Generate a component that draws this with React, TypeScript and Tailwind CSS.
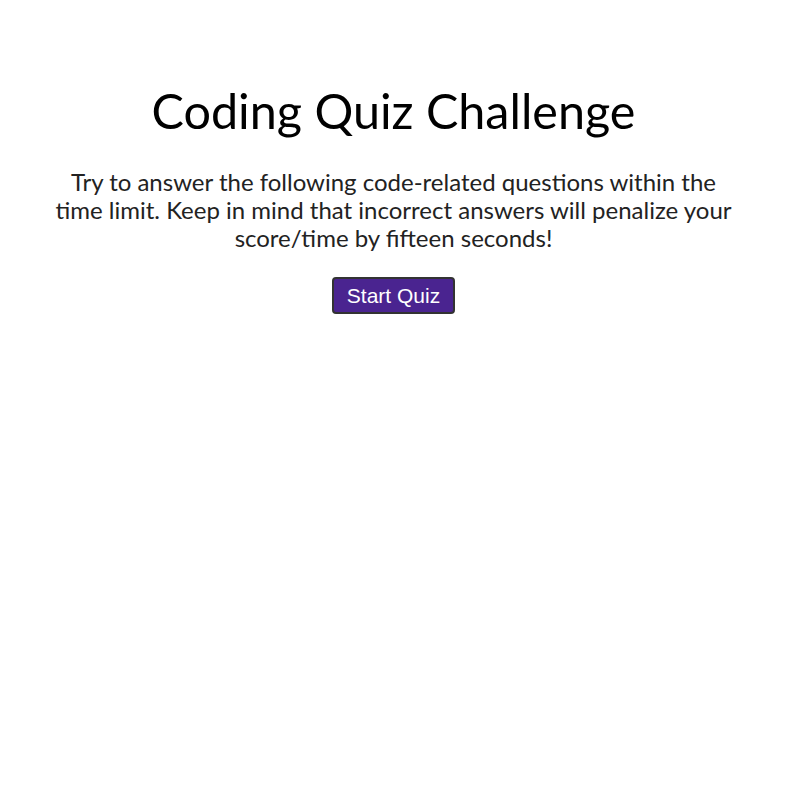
import React from 'react';

export default function App() {
  return (
    <div className="min-h-screen bg-white font-['Lato',sans-serif] text-[#222]">
      <div className="w-[787px]">
        <main className="mx-auto flex w-[686px] flex-col items-center pt-[81px] text-center">
          <h1 className="text-[48.5px] leading-[58px] font-normal text-black">Coding Quiz Challenge</h1>
          <p className="mt-[29px] text-[24px] leading-[28px]">
            Try to answer the following code-related questions within the time limit. Keep in mind that incorrect answers will penalize your score/time by fifteen seconds!
          </p>
          <button className="mt-[25px] rounded-[4px] border-2 border-[#333] bg-[#4a2490] px-[13px] py-[4px] font-['Liberation_Sans',Arial,sans-serif] text-[21px] leading-[25px] text-white">
            Start Quiz
          </button>
        </main>
      </div>
    </div>
  );
}
